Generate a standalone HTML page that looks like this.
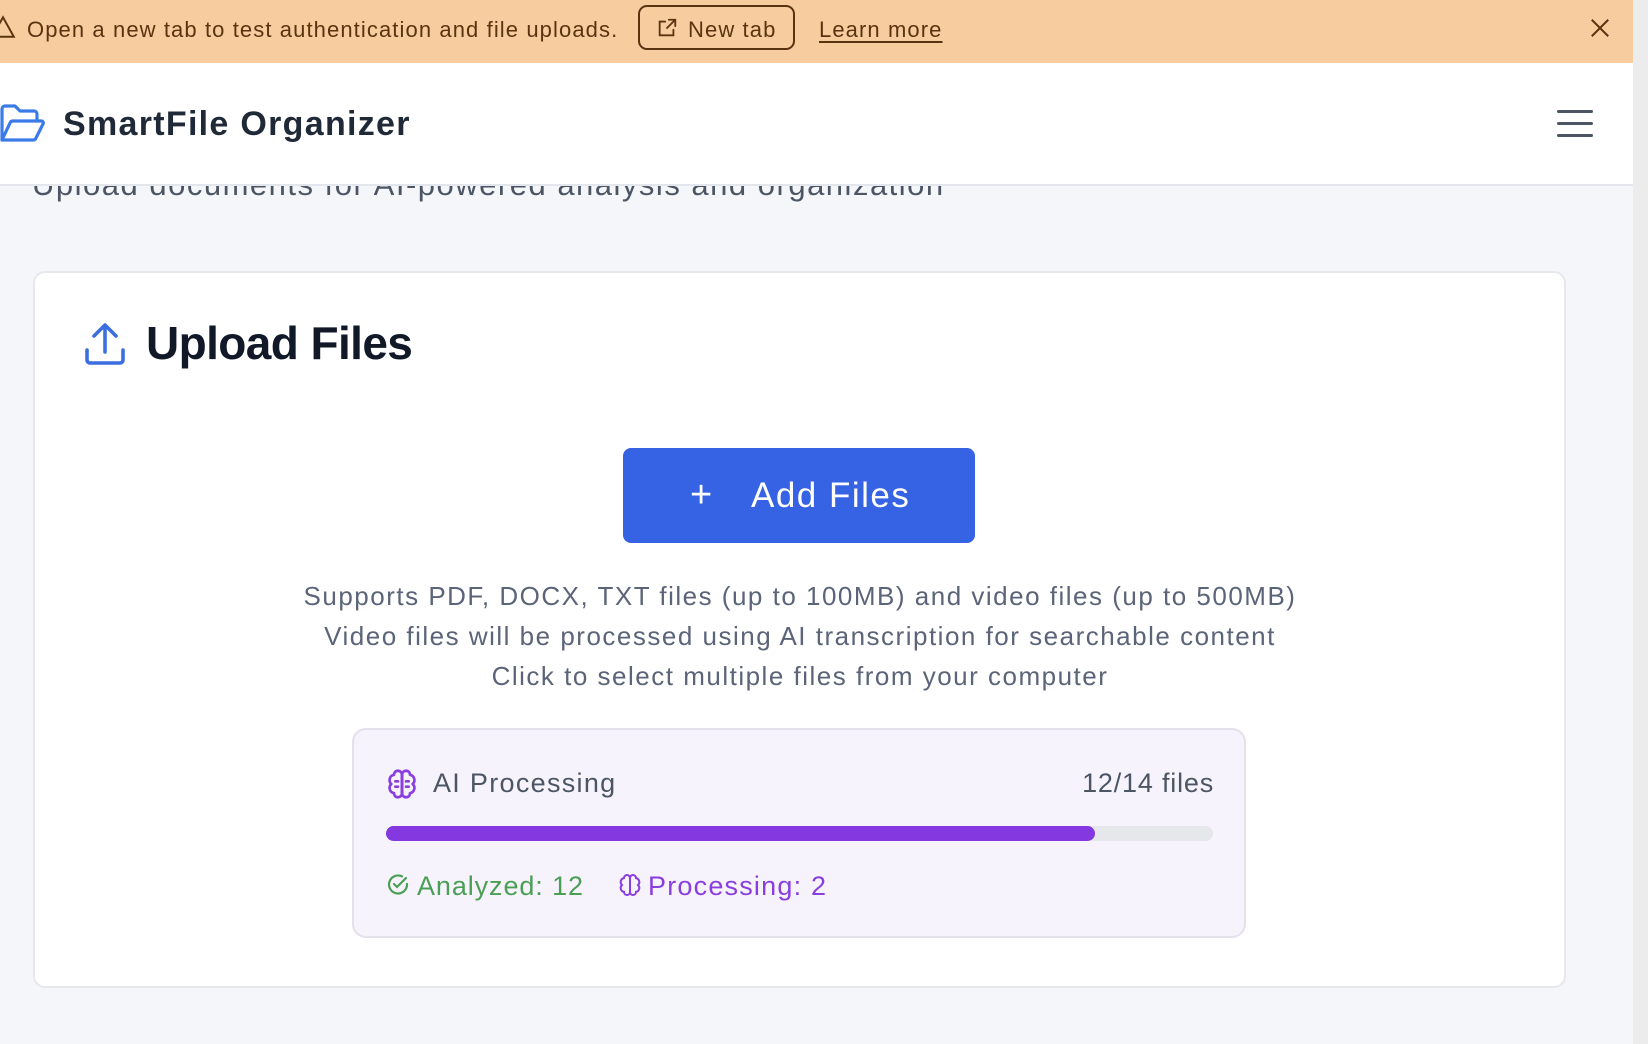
<!DOCTYPE html>
<html><head><meta charset="utf-8"><style>
*{margin:0;padding:0;box-sizing:border-box}
body{width:1648px;height:1044px;overflow:hidden;background:#f4f6fa;font-family:"Liberation Sans",sans-serif;position:relative}
.abs{position:absolute;white-space:nowrap}
.banner{left:0;top:0;width:1633px;height:63px;background:#f7cda0;color:#5a3410;font-size:22px;letter-spacing:1.1px}
.sb{left:1633px;top:0;width:15px;height:1044px;background:#ececec}
.header{left:0;top:63px;width:1633px;height:123px;background:#fff;border-bottom:2px solid #e3e6ec}
.card{left:33px;top:271px;width:1533px;height:717px;background:#fff;border:2px solid #e6e8ec;border-radius:12px}
.sub{color:#5b6478;font-size:26px;letter-spacing:1.5px;line-height:28px;text-align:center;width:1600px;left:0}
.ai{left:352px;top:728px;width:894px;height:210px;background:#f6f3fd;border:2px solid #e4e0ec;border-radius:14px}
</style></head><body>
<div class="abs banner">
  <svg class="abs" style="left:-10px;top:14px" width="26" height="26" viewBox="0 0 24 24" fill="none" stroke="#5a3410" stroke-width="1.8"><path d="M12 3L22 21H2Z"/></svg>
  <div class="abs" style="left:27px;top:17px">Open a new tab to test authentication and file uploads.</div>
  <div class="abs" style="left:638px;top:5px;width:157px;height:45px;border:2px solid #5a3410;border-radius:9px"></div>
  <svg class="abs" style="left:656px;top:17px" width="22" height="22" viewBox="0 0 24 24" fill="none" stroke="#5a3410" stroke-width="2" stroke-linecap="round"><path d="M14 3h7v7M21 3l-9 9M19 14v6H4V5h6"/></svg>
  <div class="abs" style="left:688px;top:17px">New tab</div>
  <div class="abs" style="left:819px;top:17px;text-decoration:underline;text-underline-offset:4px">Learn more</div>
  <svg class="abs" style="left:1589px;top:17px" width="22" height="22" viewBox="0 0 24 24" stroke="#5a3410" stroke-width="2.2"><path d="M3 3l18 18M21 3L3 21"/></svg>
</div>
<div class="abs" style="left:32px;top:167px;font-size:31px;letter-spacing:1.5px;color:#4b5563">Upload documents for AI-powered analysis and organization</div>
<div class="abs header">
  <svg class="abs" style="left:0;top:41px" width="46" height="40" viewBox="0 0 46 40" fill="none" stroke="#3b7be8" stroke-width="3.2" stroke-linejoin="round" stroke-linecap="round"><path d="M2 36V5a3 3 0 0 1 3-3h10l5 5h14a3 3 0 0 1 3 3v5"/><path d="M2 36l8-17a3 3 0 0 1 3-2h28a2 2 0 0 1 2 3l-7 14a3 3 0 0 1-3 2Z"/></svg>
  <div class="abs" style="left:63px;top:42px;font-size:34px;letter-spacing:1.3px;font-weight:bold;color:#1f2937">SmartFile Organizer</div>
  <div class="abs" style="left:1557px;top:47px;width:36px;height:3px;background:#4b5563;border-radius:2px;box-shadow:0 12px 0 #4b5563,0 24px 0 #4b5563"></div>
</div>
<div class="abs sb"></div>
<div class="abs card"></div>
<svg class="abs" style="left:84px;top:322px" width="42" height="44" viewBox="0 0 42 44" fill="none" stroke="#3b6fe0" stroke-width="3.6" stroke-linecap="round" stroke-linejoin="round"><path d="M21 30V4M10 14L21 3l11 11M3 28v10a3 3 0 0 0 3 3h30a3 3 0 0 0 3-3V28"/></svg>
<div class="abs" style="left:146px;top:316px;font-size:46px;letter-spacing:-0.6px;font-weight:bold;color:#111827">Upload Files</div>
<div class="abs" style="left:623px;top:448px;width:352px;height:95px;background:#3563e3;border-radius:8px;color:#fff">
  <div class="abs" style="left:67px;top:26px;font-size:38px">+</div>
  <div class="abs" style="left:128px;top:28px;font-size:35px;letter-spacing:1.5px">Add Files</div>
</div>
<div class="abs sub" style="top:582px">Supports PDF, DOCX, TXT files (up to 100MB) and video files (up to 500MB)</div>
<div class="abs sub" style="top:622px">Video files will be processed using AI transcription for searchable content</div>
<div class="abs sub" style="top:662px">Click to select multiple files from your computer</div>
<div class="abs ai">
  <svg class="abs" style="left:32px;top:38px" width="32" height="32" viewBox="0 0 24 24" fill="none" stroke="#8a3ee0" stroke-width="2" stroke-linecap="round" stroke-linejoin="round"><path d="M12 5a3 3 0 1 0-6 .1A4 4 0 0 0 4 12a4 4 0 0 0 2 6.9A3 3 0 0 0 12 19Z"/><path d="M12 5a3 3 0 1 1 6 .1A4 4 0 0 1 20 12a4 4 0 0 1-2 6.9A3 3 0 0 1 12 19Z"/><path d="M12 5v14M9 10h-2M15 10h2M9 14h-2M15 14h2"/></svg>
  <div class="abs" style="left:79px;top:38px;font-size:27px;letter-spacing:1.3px;color:#4b5563">AI Processing</div>
  <div class="abs" style="right:30px;top:38px;font-size:27px;letter-spacing:0.8px;color:#4b5563">12/14 files</div>
  <div class="abs" style="left:32px;top:96px;width:827px;height:15px;background:#e5e7eb;border-radius:8px"><div style="width:709px;height:15px;background:#8338e0;border-radius:8px"></div></div>
  <svg class="abs" style="left:32px;top:143px" width="24" height="24" viewBox="0 0 24 24" fill="none" stroke="#4a9f55" stroke-width="2.2" stroke-linecap="round"><path d="M21 11a9 9 0 1 1-5-7.6"/><path d="M8 11l3 3 9-9"/></svg>
  <div class="abs" style="left:63px;top:141px;font-size:27px;letter-spacing:0.9px;color:#4a9f55">Analyzed: 12</div>
  <svg class="abs" style="left:264px;top:143px" width="24" height="24" viewBox="0 0 24 24" fill="none" stroke="#8a3ee0" stroke-width="2" stroke-linecap="round"><path d="M12 5a3 3 0 1 0-6 .1A4 4 0 0 0 4 12a4 4 0 0 0 2 6.9A3 3 0 0 0 12 19Z"/><path d="M12 5a3 3 0 1 1 6 .1A4 4 0 0 1 20 12a4 4 0 0 1-2 6.9A3 3 0 0 1 12 19Z"/><path d="M12 5v14"/></svg>
  <div class="abs" style="left:294px;top:141px;font-size:27px;letter-spacing:1.2px;color:#8a3ee0">Processing: 2</div>
</div>
</body></html>
